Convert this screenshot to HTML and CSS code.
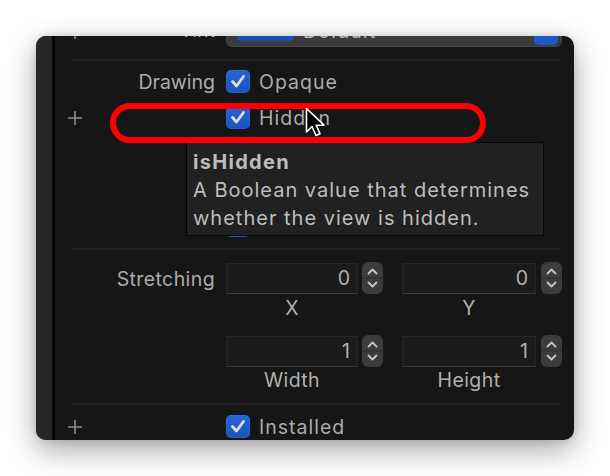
FILE: index.html
```html
<!DOCTYPE html>
<html>
<head>
<meta charset="utf-8">
<link rel="stylesheet" href="styles.css">
</head>
<body>
<div class="stage">
  <div class="panel">
    <div class="strip"></div>
    <div class="content">
      <div class="row tint-row">
        <div class="gutter"><svg class="plus" viewBox="0 0 14 14"><path d="M7 0V14M0 7H14"/></svg></div>
        <div class="label">Tint</div>
        <div class="popup">
          <span class="swatch"></span>
          <span class="popup-text">Default</span>
          <span class="popup-btn"></span>
        </div>
      </div>
      <div class="sep"></div>
      <div class="checks">
        <div class="row">
          <div class="gutter"></div>
          <div class="label">Drawing</div>
          <span class="cb"><svg viewBox="0 0 24 23"><path d="M6.5 11.5L10.5 16L17.5 6.5"/></svg></span>
          <span class="cb-text">Opaque</span>
        </div>
        <div class="row">
          <div class="gutter"><svg class="plus" viewBox="0 0 14 14"><path d="M7 0V14M0 7H14"/></svg></div>
          <div class="label"></div>
          <span class="cb"><svg viewBox="0 0 24 23"><path d="M6.5 11.5L10.5 16L17.5 6.5"/></svg></span>
          <span class="cb-text">Hidden</span>
        </div>
        <div class="row">
          <div class="gutter"></div>
          <div class="label"></div>
          <span class="cb"><svg viewBox="0 0 24 23"><path d="M6.5 11.5L10.5 16L17.5 6.5"/></svg></span>
          <span class="cb-text">Clears Graphics Context</span>
        </div>
        <div class="row">
          <div class="gutter"></div>
          <div class="label"></div>
          <span class="cb"><svg viewBox="0 0 24 23"><path d="M6.5 11.5L10.5 16L17.5 6.5"/></svg></span>
          <span class="cb-text">Clip to Bounds</span>
        </div>
        <div class="row">
          <div class="gutter"></div>
          <div class="label"></div>
          <span class="cb"><svg viewBox="0 0 24 23"><path d="M6.5 11.5L10.5 16L17.5 6.5"/></svg></span>
          <span class="cb-text">Autoresize Subviews</span>
        </div>
      </div>
      <div class="sep sep2"></div>
      <div class="stretch">
        <div class="gutter"></div>
        <div class="label stretch-label">Stretching</div>
        <div class="grid">
          <div class="unit">
            <div class="spin"><div class="field f1">0</div><span class="stepper"><svg viewBox="0 0 21 32"><path d="M6.5 11.5L10.5 7.5L14.5 11.5M6.5 20.5L10.5 24.5L14.5 20.5"/><line class="mid" x1="0" y1="16" x2="21" y2="16"/></svg></span></div>
            <div class="cap c1">X</div>
          </div>
          <div class="unit">
            <div class="spin"><div class="field f2">0</div><span class="stepper"><svg viewBox="0 0 21 32"><path d="M6.5 11.5L10.5 7.5L14.5 11.5M6.5 20.5L10.5 24.5L14.5 20.5"/><line class="mid" x1="0" y1="16" x2="21" y2="16"/></svg></span></div>
            <div class="cap c2">Y</div>
          </div>
          <div class="unit">
            <div class="spin"><div class="field f1">1</div><span class="stepper"><svg viewBox="0 0 21 32"><path d="M6.5 11.5L10.5 7.5L14.5 11.5M6.5 20.5L10.5 24.5L14.5 20.5"/><line class="mid" x1="0" y1="16" x2="21" y2="16"/></svg></span></div>
            <div class="cap c1">Width</div>
          </div>
          <div class="unit">
            <div class="spin"><div class="field f2">1</div><span class="stepper"><svg viewBox="0 0 21 32"><path d="M6.5 11.5L10.5 7.5L14.5 11.5M6.5 20.5L10.5 24.5L14.5 20.5"/><line class="mid" x1="0" y1="16" x2="21" y2="16"/></svg></span></div>
            <div class="cap c2">Height</div>
          </div>
        </div>
      </div>
      <div class="sep sep3"></div>
      <div class="row">
        <div class="gutter"><svg class="plus" viewBox="0 0 14 14"><path d="M7 0V14M0 7H14"/></svg></div>
        <div class="label"></div>
        <span class="cb"><svg viewBox="0 0 24 23"><path d="M6.5 11.5L10.5 16L17.5 6.5"/></svg></span>
        <span class="cb-text">Installed</span>
      </div>
    </div>

    <div class="tooltip">
      <div class="tt-title">isHidden</div>
      <div class="tt-body">A Boolean value that determines whether the view is hidden.</div>
    </div>
    <div class="annot"></div>
    <svg class="cursor" viewBox="0 0 22 32"><path d="M1.5 1.5V25L7 19.5L11 28.5L15 26.8L11.2 18.2H19Z"/></svg>
  </div>
</div>
</body>
</html>
```

FILE: styles.css
```css
html, body {
  margin: 0;
  padding: 0;
  background: #ffffff;
}
body {
  font-family: "Inter", "Liberation Sans", sans-serif;
  font-size: 19.5px;
  color: #ababab;
}
.stage {
  padding: 36px;
  width: 538px;
}
.panel {
  position: relative;
  width: 538px;
  height: 404px;
  background: #161616;
  border-radius: 10px;
  overflow: hidden;
  display: flex;
  box-shadow: 0 10px 30px rgba(0, 0, 0, 0.35), 0 0 8px rgba(0, 0, 0, 0.12);
}
.strip {
  width: 16px;
  flex: none;
  background: #272727;
  border-right: 3px solid #050505;
}
.content {
  flex: 1;
  display: flex;
  flex-direction: column;
}
.row {
  display: flex;
  align-items: center;
  height: 23px;
}
.gutter {
  width: 27px;
  flex: none;
  padding-left: 13px;
  box-sizing: border-box;
  display: flex;
  align-items: center;
}
.plus {
  width: 14px;
  height: 14px;
  stroke: #8c8c8c;
  stroke-width: 1.6;
  fill: none;
}
.label {
  width: 133px;
  flex: none;
  text-align: right;
  margin-right: 11px;
  white-space: nowrap;
}
.tint-row {
  height: 31px;
  margin-top: -20px;
}
.tint-row .label {
  margin-top: -3px;
}
.popup {
  position: relative;
  width: 336px;
  height: 31px;
  box-sizing: border-box;
  background: #3b3b3b;
  border: 1px solid #464646;
  border-radius: 6px;
  display: flex;
  align-items: center;
}
.swatch {
  width: 55px;
  height: 18px;
  margin-left: 11px;
  background: #1b4fb6;
  border-radius: 2px;
}
.popup-text {
  margin-left: 10px;
  margin-top: -2px;
  color: #b6b6b6;
  letter-spacing: 1px;
}
.popup-btn {
  margin-left: auto;
  margin-right: 3px;
  width: 24px;
  height: 26px;
  background: #1f58c8;
  border-radius: 5px;
}
.sep {
  height: 2px;
  background: #222222;
  margin: 12px 14px 0 17px;
}
.checks {
  display: flex;
  flex-direction: column;
  gap: 13px;
  margin-top: 9px;
}
.cb {
  width: 24px;
  height: 23px;
  flex: none;
  border-radius: 5px;
  background: linear-gradient(#2466d6, #1b52bd);
  box-shadow: inset 0 0 0 1px rgba(255, 255, 255, 0.06);
}
.cb svg {
  display: block;
  width: 24px;
  height: 23px;
  fill: none;
  stroke: #dcdcdc;
  stroke-width: 2.8;
  stroke-linecap: round;
  stroke-linejoin: round;
}
.cb-text {
  margin-left: 9px;
  white-space: nowrap;
  letter-spacing: 1px;
}
.sep2 {
  margin-top: 11px;
}
.stretch {
  display: flex;
  margin-top: 12px;
}
.stretch-label {
  padding-top: 5px;
  line-height: 24px;
  letter-spacing: 0.4px;
}
.grid {
  display: grid;
  grid-template-columns: 157px 160px;
  column-gap: 19px;
}
.unit {
  display: flex;
  flex-direction: column;
}
.spin {
  display: flex;
  align-items: flex-start;
  height: 32px;
}
.field {
  height: 31px;
  margin-top: 1px;
  box-sizing: border-box;
  background: #1b1b1b;
  border: 1px solid #262626;
  border-bottom-color: #3a3a3a;
  text-align: right;
  padding-right: 7px;
  line-height: 29px;
  color: #b0b0b0;
}
.f1 {
  width: 132px;
}
.f2 {
  width: 134px;
}
.stepper {
  width: 21px;
  height: 32px;
  margin-left: 4px;
  flex: none;
  background: #3c3c3c;
  border-radius: 6px;
}
.f2 + .stepper {
  margin-left: 5px;
}
.stepper svg {
  display: block;
  width: 21px;
  height: 32px;
  fill: none;
  stroke: #c4c4c4;
  stroke-width: 1.8;
  stroke-linecap: round;
  stroke-linejoin: round;
}
.stepper .mid {
  stroke: #2c2c2c;
  stroke-width: 1;
}
.cap {
  text-align: center;
  height: 41px;
  line-height: 28px;
  color: #b0b0b0;
  letter-spacing: 0.4px;
}
.c1 {
  width: 132px;
}
.c2 {
  width: 134px;
}
.grid .unit:nth-child(n+3) .cap {
  height: 36px;
  line-height: 26px;
}
.sep3 {
  margin-top: 0;
}
.sep3 + .row {
  margin-top: 10px;
}
.tooltip {
  position: absolute;
  left: 150px;
  top: 106px;
  width: 358px;
  height: 94px;
  box-sizing: border-box;
  background: #212121;
  border: 1px solid #060606;
  padding: 5px 4px 0 6px;
  color: #bdbdbd;
  font-size: 20px;
  line-height: 28px;
  letter-spacing: 1px;
}
.tt-title {
  font-weight: 700;
  letter-spacing: 1.3px;
}
.annot {
  position: absolute;
  left: 74px;
  top: 67px;
  width: 376px;
  height: 40px;
  box-sizing: border-box;
  border: 6px solid #ff0000;
  border-radius: 20px;
}
.cursor {
  position: absolute;
  left: 269px;
  top: 71px;
  width: 22px;
  height: 32px;
  fill: #000;
  stroke: #fff;
  stroke-width: 1.6;
  stroke-linejoin: round;
}
```
